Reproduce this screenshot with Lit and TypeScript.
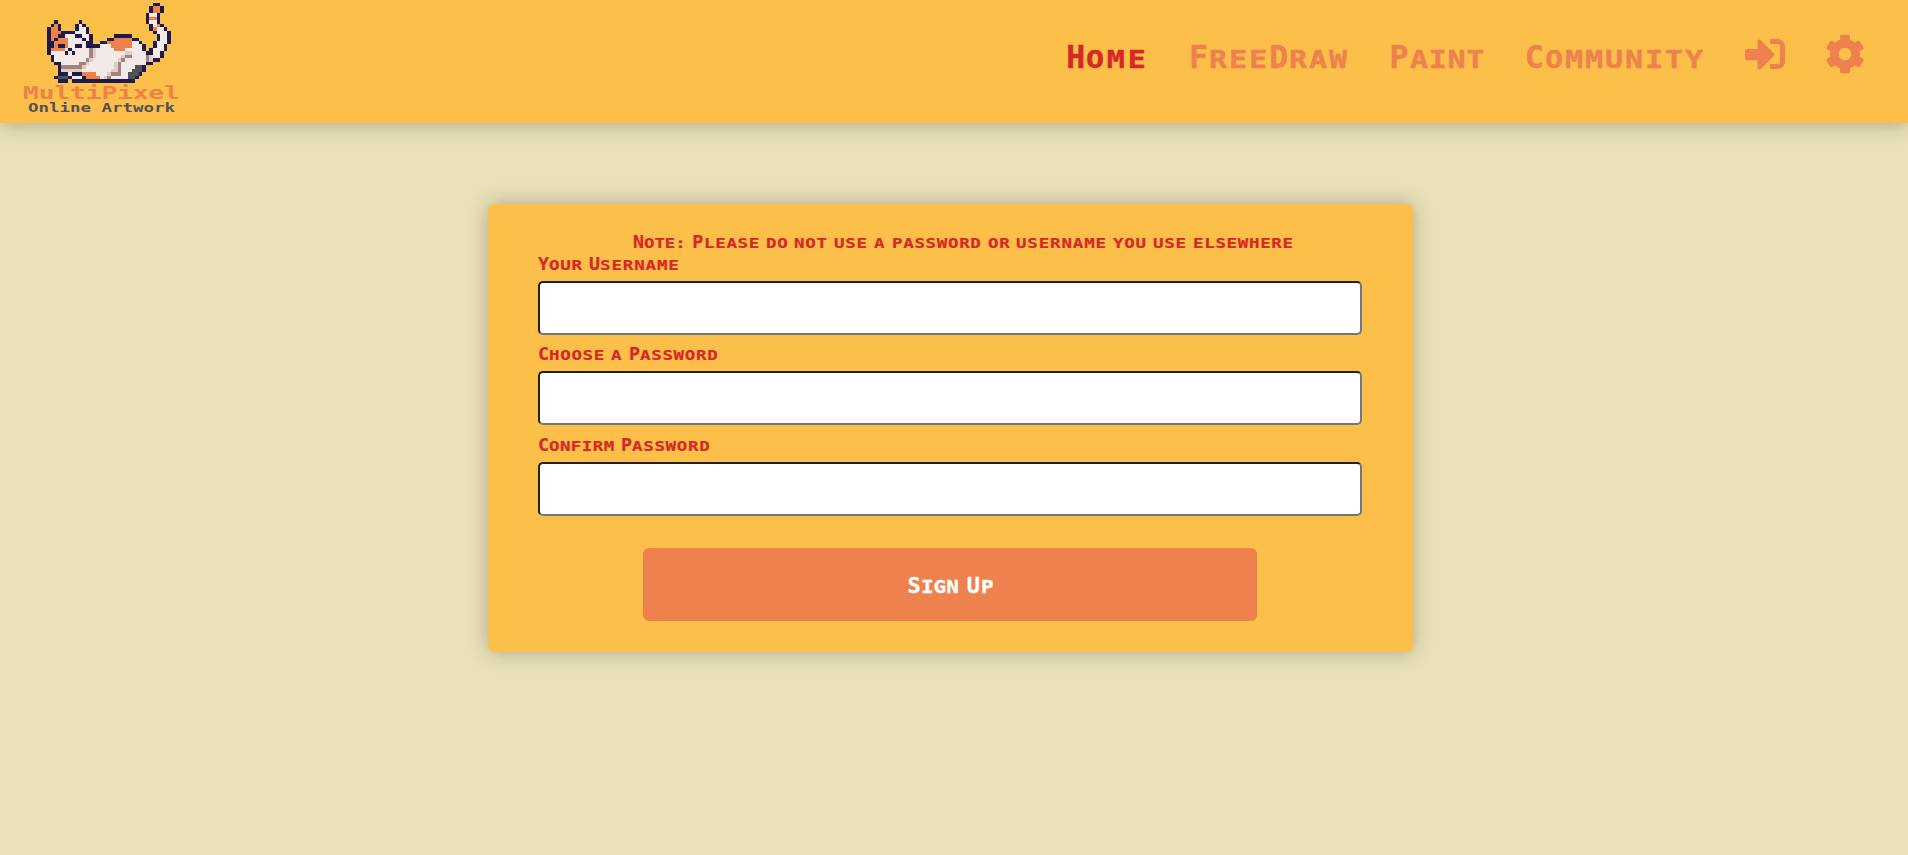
import { LitElement, html, svg, css } from "lit";
import { customElement, property } from "lit/decorators.js";
import { classMap } from "lit/directives/class-map.js";

const CELL_W = 3.533;
const CELL_H = 3.49;

const PALETTE: Record<string, string> = {
  D: "#1d1a4d",
  W: "#f3e9e7",
  O: "#ef8249",
  P: "#e2cac5",
  B: "#a3837d",
  G: "#4d5254",
};

// One row per line: [first column, run of palette letters] pairs.
const CAT: [number, string][][] = [
  [[30, "DD"]],
  [[29, "DOOD"]],
  [[29, "DOOD"]],
  [[28, "DWWD"]],
  [[28, "DOOD"]],
  [[2, "D"], [9, "D"], [28, "DWWD"]],
  [[1, "DOD"], [8, "DWD"], [29, "DWOD"]],
  [[0, "DOOD"], [8, "DWWD"], [29, "DOWWD"]],
  [[0, "DOOODDDDWWWD"], [30, "DWWWD"]],
  [[0, "DOODDWWWDDWWD"], [19, "DDDDD"], [31, "DWWD"]],
  [[0, "DODOOOWWWWDWD"], [17, "DDOOOOODD"], [31, "DWWD"]],
  [[0, "DDOOOOWWWWWDD"], [15, "DDOOOOOOOWWD"], [30, "DWWWD"]],
  [[0, "DDODDOWWDDWDDDDWWWOOOOOOWWWD"], [30, "DWWD"]],
  [[0, "DOOOOWDWWWWWBPWWWWWOOOWWWWWD"], [29, "DWWWD"]],
  [[0, "DWWWWDWDWWWWBPWWWWWWWWPPWWWWDDWWD"]],
  [[1, "DWWWWWWWWWWBPWWWWWWWPBBWWWWBPWWD"]],
  [[1, "DWWWWWWWWWBPWWWWWWWPBWWWWWWBPDD"]],
  [[2, "DDWWWWWBBPWWWWWWWPBWWWWWWWDD"]],
  [[3, "DBBBBBBPWWWWWWWWPBWWWWGGD"]],
  [[3, "DPPPPPPWWWWWWWWPPBWWWGGGD"]],
  [[3, "DDDWDDDOOOOWWWPBBBWWGGGD"]],
  [[2, "DGGGDWWWDOOOOWPBWWWWWGGD"]],
  [[3, "DDD"], [7, "DDDDDDDDDDDDDDDDDD"]],
];

const WEIGHT: Record<string, number> = { m: 1.12, M: 1.12, i: 0.74, I: 0.74, ":": 0.73 };
const units = (s: string) => [...s].reduce((n, c) => n + (WEIGHT[c] ?? 1), 0);

/** Text whose lowercase letters are drawn as wide small capitals. */
@customElement("pixel-text")
class PixelText extends LitElement {
  @property() text = "";

  static styles = css`
    :host {
      display: inline-block;
      white-space: nowrap;
      text-align: left;
      word-spacing: calc(0.56 * var(--pitch) - 0.602em);
      -webkit-text-stroke: 0.012em currentColor;
    }
    .cap {
      letter-spacing: calc(var(--pitch) - 0.602em);
    }
    .low {
      display: inline-block;
      width: calc(var(--units) * var(--pitch));
      font-size: 0.783em;
      line-height: 1;
      text-transform: uppercase;
      letter-spacing: calc(var(--units) * var(--pitch) / var(--count) / 1.22 - 0.602em);
      transform: scaleX(1.22);
      transform-origin: 0 0;
    }
  `;

  render() {
    const runs = this.text.match(/[A-Z]+|[a-z:]+|\s+/g) ?? [];
    return runs.map((r) => {
      if (/^\s/.test(r)) return " ";
      if (/^[A-Z]/.test(r)) return html`<span class="cap">${r}</span>`;
      return html`<span class="low" style="--units:${units(r)};--count:${r.length}">${r}</span>`;
    });
  }
}

@customElement("site-logo")
class SiteLogo extends LitElement {
  static styles = css`
    :host {
      display: block;
    }
    svg {
      display: block;
    }
    text {
      font-family: "DejaVu Sans Mono", monospace;
    }
    .name {
      font-size: 18.5px;
      font-weight: 700;
      fill: #ef8249;
    }
    .tag {
      font-size: 12.6px;
      font-weight: 700;
      fill: #50515a;
    }
  `;

  render() {
    return html`<svg width="180" height="123" viewBox="0 0 180 123">
      <g transform="translate(37 2.6)" shape-rendering="crispEdges">
        ${CAT.map((row, y) =>
          row.map(([start, run]) =>
            [...run].map(
              (c, i) => svg`<rect x=${(start + i) * CELL_W} y=${y * CELL_H}
                width=${CELL_W} height=${CELL_H} fill=${PALETTE[c]}></rect>`
            )
          )
        )}
      </g>
      <text class="name" x="13" y="99" textLength="157" lengthAdjust="spacingAndGlyphs">MultiPixel</text>
      <text class="tag" x="18" y="112" textLength="147" lengthAdjust="spacingAndGlyphs">Online Artwork</text>
    </svg>`;
  }
}

const SIGN_IN =
  "M416 448h-84c-6.6 0-12-5.4-12-12v-40c0-6.6 5.4-12 12-12h84c17.7 0 32-14.3 32-32V160c0-17.7-14.3-32-32-32h-84c-6.6 0-12-5.4-12-12V76c0-6.6 5.4-12 12-12h84c53 0 96 43 96 96v192c0 53-43 96-96 96zm-47-201L201 79c-15-15-41-4.5-41 17v96H24c-13.3 0-24 10.7-24 24v96c0 13.3 10.7 24 24 24h136v96c0 21.5 26 32 41 17l168-168c9.3-9.4 9.3-24.6 0-34z";
const COG =
  "M487.4 315.7l-42.6-24.6c4.3-23.2 4.3-47 0-70.2l42.6-24.6c4.9-2.8 7.1-8.6 5.5-14-11.1-35.6-30-67.8-54.7-94.6-3.8-4.1-10-5.1-14.8-2.3L380.8 110c-17.9-15.4-38.5-27.3-60.8-35.1V25.8c0-5.6-3.9-10.5-9.4-11.7-36.7-8.2-74.3-7.8-109.2 0-5.5 1.2-9.4 6.1-9.4 11.7V75c-22.2 7.9-42.8 19.8-60.8 35.1L88.7 85.5c-4.9-2.8-11-1.9-14.8 2.3-24.7 26.7-43.6 58.9-54.7 94.6-1.7 5.4.6 11.2 5.5 14L67.3 221c-4.3 23.2-4.3 47 0 70.2l-42.6 24.6c-4.9 2.8-7.1 8.6-5.5 14 11.1 35.6 30 67.8 54.7 94.6 3.8 4.1 10 5.1 14.8 2.3l42.6-24.6c17.9 15.4 38.5 27.3 60.8 35.1v49.2c0 5.6 3.9 10.5 9.4 11.7 36.7 8.2 74.3 7.8 109.2 0 5.5-1.2 9.4-6.1 9.4-11.7v-49.2c22.2-7.9 42.8-19.8 60.8-35.1l42.6 24.6c4.9 2.8 11 1.9 14.8-2.3 24.7-26.7 43.6-58.9 54.7-94.6 1.5-5.5-.7-11.3-5.6-14.1zM256 336c-44.1 0-80-35.9-80-80s35.9-80 80-80 80 35.9 80 80-35.9 80-80 80z";

@customElement("app-root")
class AppRoot extends LitElement {
  static styles = css`
    :host {
      display: flex;
      flex-direction: column;
      align-items: center;
      box-sizing: border-box;
      height: 855px;
      background: #e8e1b7;
      font-family: "DejaVu Sans Mono", monospace;
      font-weight: 700;
      overflow: hidden;
    }
    header {
      display: flex;
      justify-content: space-between;
      box-sizing: border-box;
      width: 100%;
      height: 123px;
      flex: none;
      padding: 0 43px 0 10px;
      background: #fcbf49;
      box-shadow: 0 0 20px rgba(0, 0, 0, 0.3);
    }
    nav {
      display: flex;
      gap: 40.1px;
      height: 40px;
      padding-top: 34px;
      color: #ee814d;
      --pitch: 20.06px;
      font-size: 31.5px;
      line-height: 46px;
    }
    .active {
      color: #d62828;
    }
    .icon {
      display: block;
      width: 40px;
      height: 40px;
      fill: currentColor;
    }
    form {
      display: flex;
      flex-direction: column;
      box-sizing: border-box;
      width: 925px;
      height: 448px;
      flex: none;
      margin: 80.5px 8px 0 0;
      padding: 26px 50.5px 31px;
      border-radius: 6px;
      background: #fcbf49;
      box-shadow: 0 0 20px rgba(0, 0, 0, 0.25);
      color: #d62828;
      --pitch: 11.2px;
      font-size: 18.3px;
      line-height: 23px;
    }
    .note {
      height: 22.1px;
      padding-left: 27px;
      text-align: center;
    }
    .field {
      display: flex;
      flex-direction: column;
      gap: 6.3px;
      height: 90.6px;
    }
    .field pixel-text {
      height: 22.8px;
      line-height: 24px;
    }
    input {
      box-sizing: border-box;
      width: 100%;
      height: 54px;
      margin: 0;
      padding: 0 12px;
      border: 2px inset #767676;
      border-radius: 5px;
      background: #fff;
      outline: none;
    }
    button {
      align-self: center;
      width: 613.5px;
      height: 72.8px;
      margin-top: auto;
      padding: 3px 0 0 2px;
      border: 0;
      border-radius: 6px;
      background: #ee814d;
      color: #fff;
      font: inherit;
      --pitch: 13.8px;
      font-size: 22px;
    }
  `;

  render() {
    const links = ["Home", "FreeDraw", "Paint", "Community"];
    const fields = [
      ["Your Username", "text"],
      ["Choose a Password", "password"],
      ["Confirm Password", "password"],
    ];
    return html`
      <header>
        <site-logo></site-logo>
        <nav>
          ${links.map(
            (l, i) => html`<pixel-text class=${classMap({ active: i === 0 })} .text=${l}></pixel-text>`
          )}
          ${[SIGN_IN, COG].map(
            (d) => html`<svg class="icon" viewBox="0 0 512 512"><path d=${d}></path></svg>`
          )}
        </nav>
      </header>
      <form>
        <div class="note">
          <pixel-text .text=${"Note: Please do not use a password or username you use elsewhere"}></pixel-text>
        </div>
        ${fields.map(
          ([label, type]) => html`<label class="field">
            <pixel-text .text=${label}></pixel-text>
            <input type=${type} />
          </label>`
        )}
        <button type="button"><pixel-text .text=${"Sign Up"}></pixel-text></button>
      </form>
    `;
  }
}
